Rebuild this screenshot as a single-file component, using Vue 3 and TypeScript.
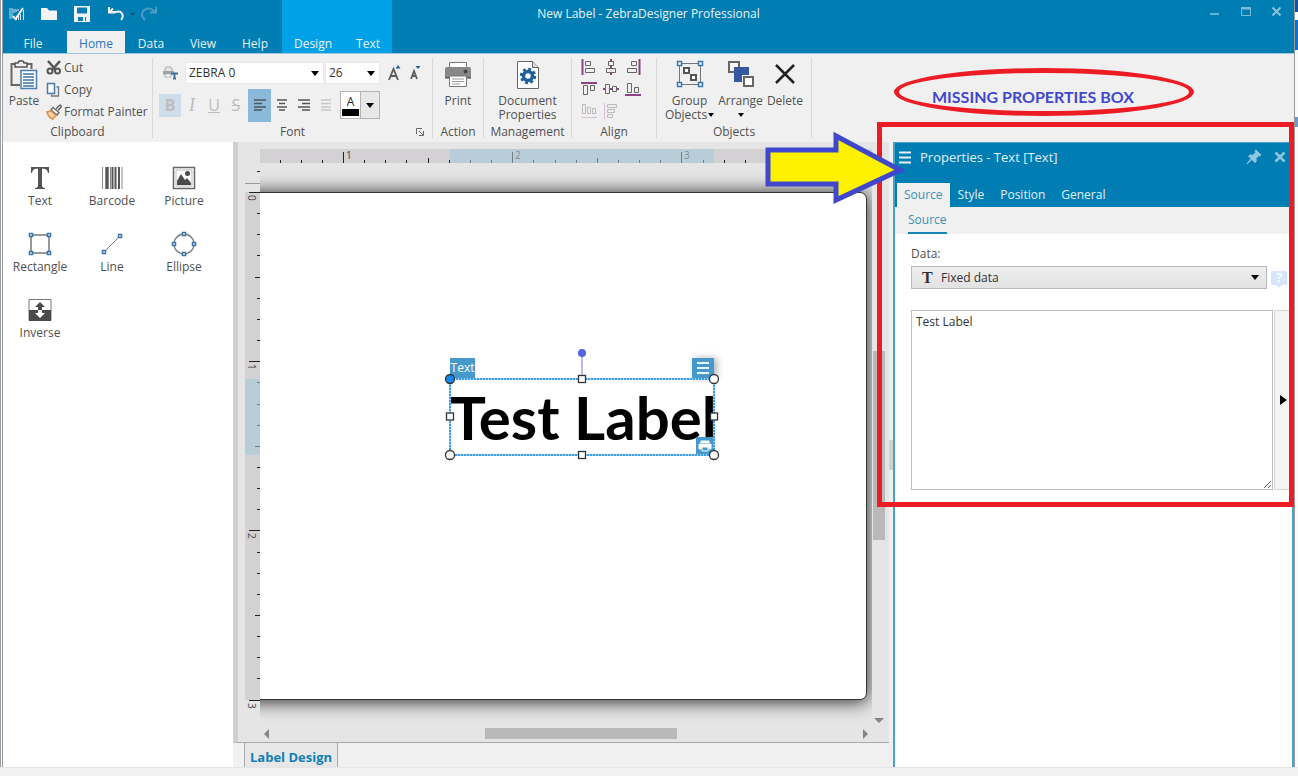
<script setup lang="ts">
import { ref } from 'vue'

interface Tick { pos: number; kind: 'major' | 'mid' | 'minor'; label: string; active: boolean }

const STEP = 169.2 / 8

function ticks(origin: number, from: number, to: number, activeFrom: number, activeTo: number, base: number): Tick[] {
  const out: Tick[] = []
  for (let n = from; n <= to; n++) {
    const pos = Math.round(origin + n * STEP)
    const m = ((n % 8) + 8) % 8
    out.push({
      pos,
      kind: m === 0 ? 'major' : m === 4 ? 'mid' : 'minor',
      label: m === 0 ? String(base + n / 8) : '',
      active: pos > activeFrom && pos < activeTo,
    })
  }
  return out
}

const hTicks = ticks(83, -3, 24, 190, 454, 1)
const vTicks = ticks(29, -1, 24, 216, 292, 0)

function tickLength(kind: Tick['kind']): number {
  return kind === 'major' ? 11 : kind === 'mid' ? 5 : 3
}

const fontName = ref('ZEBRA 0')
const fontSize = ref('26')
const dataSource = ref('Fixed data')
const content = ref('Test Label')
const tabs = ['File', 'Home', 'Data', 'View', 'Help']
const activeTab = ref('Home')
const panelTabs = ['Source', 'Style', 'Position', 'General']
const activePanelTab = ref('Source')
</script>

<template>
  <div class="desktop">
    <div class="frame">
      <div class="app">
        <header class="titlebar">
          <div class="title-left">
            <div class="nav">
              <div class="quick">
                <svg class="logo" width="16" height="14" viewBox="0 0 16 14"><path d="M1 1v11M3 1v11" stroke="#b9d9e8" /><path d="M5 2v4M7 2v3M9 2v2M7.500 11v2M9.500 9v4M11.500 7v6M14.500 3v10" stroke="#d5e8f1" /><path d="M4 9l2.500 3L14 1" stroke="#fff" stroke-width="1.800" fill="none" /></svg>
                <button aria-label="Open"><svg width="18" height="14" viewBox="0 0 18 14"><path d="M1 1h6l2 2.500h8V13H1z" fill="#f4f4f4" /></svg></button>
                <button aria-label="Save"><svg width="18" height="18" viewBox="0 0 18 18"><path d="M1 1h16v16H1z" fill="#f0f4f6" /><path d="M4 2.500h10v6H4zM5 12h8v4H5z" fill="#0a7db2" /><path d="M10 12h2v4h-2z" fill="#f0f4f6" /></svg></button>
                <button class="undo" aria-label="Undo"><svg width="30" height="16" viewBox="0 0 30 16"><path d="M3 6h7c5-2 9 3 5 8M3 1v5.500h6M3 6.500l4-4" fill="none" stroke="#f0f4f6" stroke-width="2" /><path d="M24 7h5l-2.500 2z" fill="#1e4052" /></svg></button>
                <button aria-label="Redo"><svg width="30" height="16" viewBox="0 0 30 16"><path d="M16 6.500l-4-3C7 .500 0 5 2.500 11L5 14M16 1v5.500h-6" fill="none" stroke="#4a9dc3" stroke-width="2" /><path d="M23 7h5l-2.500 2z" fill="#2a7096" /></svg></button>
              </div>
              <nav class="tabs">
                <button v-for="t in tabs" :key="t" class="tab" :class="{ on: t === activeTab, file: t === 'File' }" @click="activeTab = t">{{ t }}</button>
              </nav>
            </div>
            <nav class="context">
              <button class="tab design">Design</button>
              <button class="tab">Text</button>
            </nav>
          </div>
          <div class="caption">New Label - ZebraDesigner Professional</div>
          <div class="winctl">
            <button aria-label="Minimize"><svg width="12" height="12"><path d="M1 8h9" stroke="#8cc3db" stroke-width="1.500" /></svg></button>
            <button aria-label="Maximize"><svg width="12" height="12"><path d="M1.500 1.500h9v8h-9z" fill="none" stroke="#7dbbd7" /><path d="M1 2.500h10" stroke="#7dbbd7" stroke-width="2" /></svg></button>
            <button aria-label="Close"><svg width="12" height="12"><path d="M1.500 1.500l8 8M9.500 1.500l-8 8" stroke="#8cc3db" stroke-width="2" /></svg></button>
          </div>
        </header>

        <section class="ribbon">
          <div class="group g-clip">
            <div class="group-body">
              <button class="big paste">
                <svg width="28" height="30" viewBox="0 0 28 30"><path d="M5 4H1.500v21H10M17 4h4.500v5" fill="none" stroke="#666" stroke-width="2" /><path d="M5 7V3h3c0-3 6-3 6 0h3v4z" fill="#f0f0f0" stroke="#555" stroke-width="1.500" /><path d="M11 10.500h15.500v18H11z" fill="#fff" stroke="#4d7eaa" stroke-width="1.500" /><path d="M13 14h11M13 17h11M13 20h11M13 23h11M13 26h11" stroke="#3d73a4" stroke-width="1.500" /></svg>
                <span>Paste</span>
              </button>
              <div class="clip-list">
                <button><svg width="16" height="16" viewBox="0 0 16 16"><path d="M2 1l8 9M14 1L6 10" stroke="#555" stroke-width="2.500" /><circle cx="4" cy="11" r="2.500" fill="none" stroke="#555" stroke-width="2" /><circle cx="11.500" cy="11" r="2.500" fill="none" stroke="#555" stroke-width="2" /></svg>Cut</button>
                <button><svg width="16" height="16" viewBox="0 0 16 16"><path d="M1.500 1.500h7v10h-7z" fill="#fff" stroke="#4479a8" stroke-width="1.500" /><path d="M10.500 5h2v9h-7v-1.500" fill="none" stroke="#777" stroke-width="1.300" /></svg>Copy</button>
                <button><svg width="16" height="16" viewBox="0 0 16 16"><path d="M10 5l4-4 1.500 1.500L12 6.500" fill="#eee" stroke="#666" stroke-width="1.300" /><path d="M7 3.500l6 5-2 2.500-6-5z" fill="#fff" stroke="#666" stroke-width="1.300" /><path d="M4.500 6.500l5.500 5-3.500 3.500C4 14 2 11.500 1 8c1.500.3 2.500-.5 3.500-1.500z" fill="#fbd3ad" stroke="#e08a45" stroke-width="1.500" /></svg>Format Painter</button>
              </div>
            </div>
            <div class="group-name">Clipboard</div>
          </div>

          <div class="group g-font">
            <div class="group-body font-body">
              <div class="font-row">
                <svg class="printer-font" width="16" height="14" viewBox="0 0 16 14"><rect x="2" y="1" width="7" height="5" rx="2" fill="#e4e4e4" stroke="#aaa" /><path d="M0 5h11v3.500H0z" fill="#a2a2a2" /><path d="M2 8h6v3H2z" fill="#fff" stroke="#aaa" /><path d="M8 7.500h7M11.500 7v6M10 12.500h3" stroke="#3c6ea1" stroke-width="1.800" /></svg>
                <label class="combo wide"><select v-model="fontName" aria-label="Font"><option>ZEBRA 0</option></select><svg width="8" height="5"><path d="M0 0h8L4 5z" /></svg></label>
                <label class="combo narrow"><select v-model="fontSize" aria-label="Font size"><option>26</option></select><svg width="8" height="5"><path d="M0 0h8L4 5z" /></svg></label>
                <button class="grow" aria-label="Increase font size"><svg width="14" height="16" viewBox="0 0 14 16"><path d="M1 15L5.500 4 10 15M2.500 11h6" fill="none" stroke="#5d5d5d" stroke-width="1.800" /><path d="M7.500 3.500h5L10 0z" fill="#1d5d98" /></svg></button>
                <button class="grow" aria-label="Decrease font size"><svg width="14" height="16" viewBox="0 0 14 16"><path d="M2 14l3-8 3 8M3 11h4" fill="none" stroke="#5d5d5d" stroke-width="1.800" /><path d="M6.500 1h5L9 4z" fill="#1d5d98" /></svg></button>
              </div>
              <div class="font-row second">
                <button class="fmt bold">B</button>
                <button class="fmt italic">I</button>
                <button class="fmt under">U</button>
                <button class="fmt strike">S</button>
                <button class="fmt al on" aria-label="Align left"><svg width="14" height="12"><path d="M1 1h12M1 4.500h8M1 8h12M1 11h8" stroke="#555" stroke-width="1.500" /></svg></button>
                <button class="fmt" aria-label="Align center"><svg width="12" height="12"><path d="M1 1h10M3 4.500h6M1 8h10M3 11h6" stroke="#555" stroke-width="1.500" /></svg></button>
                <button class="fmt" aria-label="Align right"><svg width="12" height="12"><path d="M0 1h12M4 4.500h8M0 8h12M4 11h8" stroke="#555" stroke-width="1.500" /></svg></button>
                <button class="fmt" aria-label="Justify"><svg width="12" height="12"><path d="M1 1h10M1 4.500h10M1 8h10M1 11h10" stroke="#c8c8c8" stroke-width="1.500" /></svg></button>
                <button class="color" aria-label="Font color"><span class="swatch">A</span><span class="drop"><svg width="8" height="5"><path d="M0 0h8L4 5z" /></svg></span></button>
              </div>
            </div>
            <div class="group-name">Font<button class="launcher" aria-label="Font settings"><svg width="8" height="8"><path d="M.5 6V.5H6M3 3l4 4M7.500 3v4.500H3" fill="none" stroke="#666" /></svg></button></div>
          </div>

          <div class="group g-action">
            <div class="group-body">
              <button class="big">
                <svg width="28" height="30" viewBox="0 0 28 30"><path d="M5.500 9V2.500h17V9" fill="#fff" stroke="#777" /><path d="M1 9q0-2 2-2h22q2 0 2 2v9H1z" fill="#888" /><circle cx="21.500" cy="11.500" r="2" fill="#444" /><path d="M1 17h26v1.500H1z" fill="#555" /><path d="M5.500 16h17v10.500h-17z" fill="#fff" stroke="#777" /><path d="M8 19h12M8 21.500h12M8 24h8" stroke="#999" /></svg>
                <span>Print</span>
              </button>
            </div>
            <div class="group-name">Action</div>
          </div>

          <div class="group g-manage">
            <div class="group-body">
              <button class="big">
                <svg width="28" height="30" viewBox="0 0 28 30"><path d="M3.500 1.500h15l6 6v21h-21z" fill="#fff" stroke="#666" /><path d="M18.500 1.500v6h6" fill="#ddd" stroke="#666" /><circle cx="14" cy="16" r="4.500" fill="none" stroke="#1f609a" stroke-width="3.500" /><circle cx="14" cy="16" r="7" fill="none" stroke="#1f609a" stroke-width="2.500" stroke-dasharray="3 2.500" /></svg>
                <span>Document</span><span>Properties</span>
              </button>
            </div>
            <div class="group-name">Management</div>
          </div>

          <div class="group g-align">
            <div class="group-body align-grid">
              <button aria-label="Align left edges"><svg width="16" height="16"><path d="M1.500 0v16" stroke="#8a4386" stroke-width="2" /><path d="M4.500 2.500h5v4h-5zM4.500 9.500h9v4h-9z" fill="none" stroke="#666" /></svg></button>
              <button aria-label="Align centers"><svg width="16" height="16"><path d="M8 0v16" stroke="#8a4386" stroke-width="2" /><path d="M5.500 2.500h5v4h-5zM3.500 9.500h9v4h-9z" fill="#f0f0f0" stroke="#666" /></svg></button>
              <button aria-label="Align right edges"><svg width="16" height="16"><path d="M14.500 0v16" stroke="#8a4386" stroke-width="2" /><path d="M6.500 2.500h5v4h-5zM2.500 9.500h9v4h-9z" fill="none" stroke="#666" /></svg></button>
              <button aria-label="Align tops"><svg width="16" height="16"><path d="M0 2h16" stroke="#8a4386" stroke-width="2" /><path d="M2.500 4.500h4v9h-4zM9.500 4.500h4v5h-4z" fill="none" stroke="#666" /></svg></button>
              <button aria-label="Align middles"><svg width="16" height="16"><path d="M0 8h16" stroke="#8a4386" stroke-width="2" /><path d="M2.500 3.500h4v9h-4zM9.500 5.500h4v5h-4z" fill="#f0f0f0" stroke="#666" /></svg></button>
              <button aria-label="Align bottoms"><svg width="16" height="16"><path d="M0 14h16" stroke="#8a4386" stroke-width="2" /><path d="M2.500 2.500h4v9h-4zM9.500 6.500h4v5h-4z" fill="none" stroke="#666" /></svg></button>
              <button class="off" aria-label="Distribute horizontally"><svg width="16" height="16"><path d="M0 14.500h16" stroke="#c99bc6" /><path d="M1.500 1.500h3v9h-3zM6.500 4.500h3v6h-3zM11.500 5.500h3v5h-3z" fill="none" stroke="#999" /></svg></button>
              <button class="off" aria-label="Distribute vertically"><svg width="16" height="16"><path d="M1.500 0v16" stroke="#c99bc6" /><path d="M4.500 1.500h9v3h-9zM4.500 6.500h7v3h-7zM4.500 11.500h5v3h-5z" fill="none" stroke="#999" /></svg></button>
            </div>
            <div class="group-name">Align</div>
          </div>

          <div class="group g-objects">
            <div class="group-body">
              <button class="big group-btn">
                <svg width="28" height="30" viewBox="0 0 28 30"><path d="M3.500 3.500h21v21h-21z" fill="none" stroke="#777" /><path d="M1.500 1.500h4v4h-4zM22.500 1.500h4v4h-4zM1.500 22.500h4v4h-4zM22.500 22.500h4v4h-4z" fill="#fff" stroke="#3975a8" stroke-width="1.500" /><path d="M8 8h5v5H8zM15 15h5v5h-5z" fill="#fff" stroke="#555" stroke-width="2" /></svg>
                <span>Group</span><span class="with-caret">Objects<svg width="6" height="4"><path d="M0 0h6L3 4z" /></svg></span>
              </button>
              <button class="big arrange">
                <svg width="28" height="30" viewBox="0 0 28 30"><path d="M2 2h10v10H2z" fill="#f7f7f7" stroke="#666" stroke-width="2" /><path d="M7 7h15v15H7z" fill="#3459a0" /><path d="M15 15h12v12H15z" fill="#f0f0f0" /><path d="M17 17h9v9h-9z" fill="#fff" stroke="#666" stroke-width="2" /></svg>
                <span>Arrange</span><span class="with-caret"><svg width="6" height="4"><path d="M0 0h6L3 4z" /></svg></span>
              </button>
              <button class="big delete">
                <svg width="28" height="30" viewBox="0 0 28 30"><path d="M5 5l18 18M23 5L5 23" stroke="#222" stroke-width="2.500" /></svg>
                <span>Delete</span>
              </button>
            </div>
            <div class="group-name">Objects</div>
          </div>
        </section>

        <main class="body">
          <aside class="toolbox">
            <button class="tool"><svg width="26" height="26" viewBox="0 0 26 26"><path d="M4 2h18v6h-1q-.5-4-4-4.300h-2V20q0 2.800 3 3v1H8v-1q3-.2 3-3V3.700H9Q5.500 4 5 8H4z" fill="#555" /></svg>Text</button>
            <button class="tool"><svg width="26" height="26" viewBox="0 0 26 26"><path d="M3.500 2v22M6.500 2v22M9.500 2v22M11.500 2v22M23 2v22" stroke="#888" stroke-width="1" /><path d="M8 2v22M13.500 2v22M16.500 2v22M20 2v22" stroke="#555" stroke-width="2" /></svg>Barcode</button>
            <button class="tool"><svg width="26" height="26" viewBox="0 0 26 26"><path d="M2.500 2.500h21v21h-21z" fill="#fff" stroke="#666" stroke-width="1.500" /><path d="M5 5h16v16H5z" fill="none" stroke="#bbb" /><path d="M6 20v-4l4-7 4 6 2-2 4 5v2z" fill="#4a4a4a" /><circle cx="16.500" cy="8.500" r="2.500" fill="#4a4a4a" /></svg>Picture</button>
            <button class="tool"><svg width="26" height="26" viewBox="0 0 26 26"><path d="M4 4h18v18H4z" fill="none" stroke="#777" stroke-width="1.500" /><path d="M2.500 2.500h3v3h-3zM20.500 2.500h3v3h-3zM2.500 20.500h3v3h-3zM20.500 20.500h3v3h-3z" fill="#fff" stroke="#3975a8" stroke-width="1.500" /></svg>Rectangle</button>
            <button class="tool"><svg width="26" height="26" viewBox="0 0 26 26"><path d="M5 21L21 5" stroke="#888" /><path d="M3.500 19.500h3v3h-3zM19.500 3.500h3v3h-3z" fill="#fff" stroke="#3975a8" stroke-width="1.500" /></svg>Line</button>
            <button class="tool"><svg width="26" height="26" viewBox="0 0 26 26"><circle cx="13" cy="13" r="10" fill="none" stroke="#777" stroke-width="1.300" /><path d="M11.500 1.500h3v3h-3zM11.500 21.500h3v3h-3zM1.500 11.500h3v3h-3zM21.500 11.500h3v3h-3z" fill="#fff" stroke="#3975a8" stroke-width="1.500" /></svg>Ellipse</button>
            <button class="tool"><svg width="26" height="26" viewBox="0 0 26 26"><path d="M2 2.500h22v21H2z" fill="#fff" stroke="#777" /><path d="M2 13h22v11H2z" fill="#4a4a4a" /><path d="M13 5l5 5h-3v3h-4v-3H8z" fill="#4a4a4a" /><path d="M11 13h4v3h3l-5 5-5-5h3z" fill="#fff" /></svg>Inverse</button>
          </aside>

          <section class="workspace">
            <div class="editor">
              <div class="hruler">
                <svg width="100%" height="14">
                  <rect width="100%" height="14" fill="#d3d1d4" />
                  <rect x="190" width="264" height="14" fill="#b9cdd8" />
                  <g v-for="t in hTicks" :key="t.pos" :class="{ faint: t.active }">
                    <rect :x="t.pos" :y="14 - tickLength(t.kind)" width="1" :height="tickLength(t.kind)" fill="#222" />
                    <text v-if="t.label" :x="t.pos + 3" y="10">{{ t.label }}</text>
                  </g>
                </svg>
              </div>
              <div class="vruler">
                <svg width="15" height="100%">
                  <rect y="29" width="15" height="508" fill="#d3d1d4" />
                  <rect y="216" width="15" height="76" fill="#b9cdd8" />
                  <rect y="20" width="15" height="1" fill="#999" />
                  <g v-for="t in vTicks" :key="t.pos" :class="{ faint: t.active }">
                    <rect :x="15 - tickLength(t.kind)" :y="t.pos" :width="tickLength(t.kind)" height="1" fill="#222" />
                    <text v-if="t.label" :transform="`translate(3 ${t.pos + 3}) rotate(90)`">{{ t.label }}</text>
                  </g>
                </svg>
              </div>
              <div class="canvas">
                <div class="paper"></div>
                <div class="object">
                  <span class="tag">Text</span>
                  <button class="menu" aria-label="Object menu"><svg width="14" height="14"><path d="M1 2h12M1 7h12M1 12h12" stroke="#eaf4fa" stroke-width="2" /></svg></button>
                  <div class="object-text">Test Label</div>
                  <span class="printable"><svg width="14" height="12" viewBox="0 0 14 12"><path d="M3 3V1h8v2M1 4h12v5h-2V7H3v2H1z" fill="#fff" stroke="#fff" /><path d="M4 7h6v4H4z" fill="#4599cb" stroke="#fff" /></svg></span>
                  <svg class="handles" width="284" height="120" viewBox="-10 -34 284 120">
                    <path d="M132-26V0" stroke="#a3a5e8" stroke-width="1.500" />
                    <rect width="264" height="76" fill="none" stroke="#a9d6f9" stroke-width="2" />
                    <rect width="264" height="76" fill="none" stroke="#3a9bee" stroke-width="2" stroke-dasharray="2 1" />
                    <circle cx="132" cy="-26" r="4" fill="#5661dc" />
                    <g fill="#fff" stroke="#333" stroke-width="1.300">
                      <rect x="128.500" y="-3.500" width="7" height="7" /><rect x="128.500" y="72.500" width="7" height="7" />
                      <rect x="-3.500" y="34" width="7" height="7" /><rect x="260.500" y="34" width="7" height="7" />
                      <circle cx="264" cy="0" r="4.500" /><circle cx="264" cy="76" r="4.500" /><circle cx="0" cy="76" r="4.500" />
                      <circle cx="0" cy="0" r="4.500" fill="#1687f0" />
                    </g>
                  </svg>
                </div>
              </div>
              <div class="vscroll">
                <span class="vthumb"></span>
                <svg width="10" height="6"><path d="M0 0h10L5 5z" fill="#858585" /></svg>
              </div>
              <div class="hscroll">
                <svg width="6" height="10"><path d="M5 0v10L0 5z" fill="#858585" /></svg>
                <span class="hthumb"></span>
                <svg width="6" height="10"><path d="M0 0v10l5-5z" fill="#858585" /></svg>
              </div>
            </div>
            <div class="doc-tabs"><button class="doc-tab">Label Design</button></div>
          </section>
          <div class="splitter"><span></span></div>

          <aside class="panel">
            <header class="panel-head">
              <div class="panel-title">
                <svg width="13" height="13"><path d="M0 1.500h12M0 6.500h12M0 11.500h12" stroke="#e6f2f8" stroke-width="2" /></svg>
                <h2>Properties - Text [Text]</h2>
                <button aria-label="Pin"><svg width="16" height="16" viewBox="0 0 16 16"><path d="M10 1l5 5-1.500 1-1-.2-2.500 2.700.2 3L9 13.500 5.800 10.500 1 15l4-5.500L2.500 7 4 6l3 .2L9.500 3.500 9 2z" fill="#8cc6df" stroke="#8cc6df" /></svg></button>
                <button aria-label="Close panel"><svg width="12" height="12"><path d="M1.500 1.500l9 9M10.500 1.500l-9 9" stroke="#8cc6df" stroke-width="2.500" /></svg></button>
              </div>
              <nav class="panel-tabs">
                <button v-for="t in panelTabs" :key="t" :class="{ on: t === activePanelTab }" @click="activePanelTab = t">{{ t }}</button>
              </nav>
            </header>
            <nav class="subtabs"><button>Source</button></nav>
            <form class="form" @submit.prevent>
              <label for="data-source">Data:</label>
              <div class="source-row">
                <div class="source-select">
                  <span class="serif-t">T</span>
                  <select id="data-source" v-model="dataSource"><option>Fixed data</option></select>
                  <svg width="8" height="5"><path d="M0 0h8L4 5z" /></svg>
                </div>
                <button class="help" aria-label="Help">?</button>
              </div>
              <div class="content-row">
                <textarea v-model="content" aria-label="Content"></textarea>
                <button class="expand" aria-label="Expand"><svg width="8" height="10"><path d="M0 0l7 5-7 5z" /></svg></button>
              </div>
            </form>
          </aside>
        </main>

        <div class="note-box"></div>
        <div class="note-oval"></div>
        <div class="note-text">MISSING PROPERTIES BOX</div>
        <svg class="note-arrow" width="142" height="76" viewBox="0 0 142 76"><path d="M4 20h68V6l64 34-64 30V54H4z" fill="#fff200" stroke="#3f48cc" stroke-width="5" /></svg>
      </div>
      <div class="behind"><span class="b1"></span><span class="b2"></span><span class="b3"></span></div>
    </div>
    <footer class="below"></footer>
  </div>
</template>

<style>
body { margin: 0; }
</style>

<style scoped>
* { box-sizing: border-box; }
.desktop {
  min-height: 100vh; display: flex; flex-direction: column; background: #f2f2f2;
  font-family: "Open Sans", "Noto Sans", sans-serif; font-size: 12px; line-height: 14px; color: #505050;
}
button { font: inherit; color: inherit; background: none; border: 0; padding: 0; margin: 0; }
select, textarea { font: inherit; }
svg { flex: none; display: block; }
.frame { flex: 1; display: flex; min-width: 0; }
.app {
  flex: 1; min-width: 0; position: relative; display: flex; flex-direction: column; background: #fff;
  border-left: 3px double #999ea2; border-right: 1px solid #999;
}
.behind { width: 3px; display: flex; flex-direction: column; background: #fafafa; }
.b1 { height: 12px; background: #1253a8; }
.b2 { height: 30px; margin-top: 8px; background: #0b70d0; }
.b3 { height: 10px; margin-top: 67px; background: #7098ca; }
.below { height: 9px; border-top: 1px solid #e5e5e5; }

.titlebar { height: 54px; display: grid; grid-template-columns: 389px 1fr 389px; background: #007db3; border-bottom: 1px solid #9cc9dd; color: #e8f3f8; }
.title-left { display: flex; }
.nav { width: 279px; display: flex; flex-direction: column; }
.quick { height: 27px; display: flex; align-items: center; padding-left: 6px; }
.quick .logo { margin-right: 15px; }
.quick button { margin-right: 15px; }
.quick .undo { margin-right: 4px; }
.tabs { flex: 1; display: flex; align-items: flex-end; padding-top: 4px; }
.tab { width: 52px; height: 22px; padding-top: 3px; }
.tab.file { width: 64px; padding-right: 4px; }
.tab.on { width: 58px; background: #f0f0f0; color: #2878bd; }
.context { width: 110px; background: #00a1e6; display: flex; align-items: flex-end; }
.context .tab { width: 48px; }
.context .design { width: 62px; }
.caption { text-align: center; padding-top: 7px; white-space: nowrap; }
.winctl { display: flex; justify-content: flex-end; align-items: flex-start; gap: 19px; padding: 6px 11px 0 0; }

.ribbon { height: 88px; display: flex; background: #f0f0f0; padding: 4px 0; }
.group { border-right: 1px solid #d9d9d9; display: flex; flex-direction: column; }
.g-clip { width: 150px; }
.g-font { width: 280px; }
.g-action { width: 51px; }
.g-manage { width: 88px; }
.g-align { width: 85px; }
.g-objects { width: 155px; }
.group-body { flex: 1; display: flex; justify-content: center; align-items: flex-start; }
.group-name { height: 14px; text-align: center; position: relative; margin-bottom: -1px; }
.launcher { position: absolute; right: 8px; top: 3px; }
.big { display: flex; flex-direction: column; align-items: center; padding-top: 2px; white-space: nowrap; }
.big > svg { margin-bottom: 4px; }
.big span { display: block; }
.paste { width: 42px; }
.clip-list { flex: 1; display: flex; flex-direction: column; gap: 8px; padding: 3px 0 0 1px; }
.clip-list button { display: flex; align-items: center; gap: 2px; height: 14px; white-space: nowrap; }
.big .with-caret { display: flex; align-items: center; gap: 1px; height: 14px; }
.group-btn { width: 50px; }
.arrange { width: 52px; }
.delete { width: 37px; }
.font-body { flex-direction: column; justify-content: flex-start; padding-left: 6px; }
.font-row { display: flex; align-items: center; height: 30px; }
.font-row.second { height: 34px; }
.printer-font { margin: 0 6px 0 4px; }
.combo { display: grid; align-items: center; height: 22px; background: #fff; border: 1px solid #e2eaf0; margin-right: 1px; color: #333; }
.combo select { grid-area: 1 / 1; width: 100%; height: 20px; padding: 0 3px; appearance: none; border: 0; background: none; color: #333; }
.combo svg { grid-area: 1 / 1; justify-self: end; margin-right: 4px; pointer-events: none; }
.wide { width: 139px; }
.narrow { width: 55px; }
.grow { margin: 0 0 0 7px; }
.fmt { width: 22px; height: 23px; display: flex; justify-content: center; align-items: center; color: #bdbdbd; font-size: 16px; }
.bold { background: #cddde9; font-weight: 700; }
.italic { font-family: "Liberation Serif", serif; font-style: italic; font-size: 18px; }
.under { text-decoration: underline; }
.strike { text-decoration: line-through; }
.al { width: 23px; height: 33px; margin-left: 1px; }
.al.on { background: #8bb9dc; }
.color { width: 40px; height: 28px; margin-left: 3px; display: flex; border: 1px solid #b4b4b4; }
.swatch { width: 20px; padding-top: 3px; background: #fff; color: #222; border-right: 1px solid #b4b4b4; }
.swatch::after { content: ""; display: block; height: 7px; margin: 0 1px; background: #000; }
.drop { flex: 1; display: grid; place-items: center; align-self: stretch; background: #e8e8e8; }
.align-grid { display: grid; grid-template-columns: repeat(3, 16px); grid-template-rows: repeat(3, 16px); gap: 6px; justify-content: start; align-content: start; padding: 1px 0 0 9px; }
.off { opacity: .6; }

.body { flex: 1; display: flex; min-height: 0; }
.toolbox { width: 230px; padding: 20px 0 0 1px; display: grid; grid-template-columns: repeat(3, 72px); grid-auto-rows: 66px; align-content: start; }
.tool { display: flex; flex-direction: column; align-items: center; gap: 3px; padding-top: 3px; }

.workspace { flex: 1; min-width: 0; display: flex; flex-direction: column; background: #f0f0f0; }
.editor { flex: 1; display: grid; grid-template-columns: 15px 1fr 17px; grid-template-rows: 14px 1fr 17px; padding: 7px 0 0 7px; background: #e5e5e5; border-left: 5px solid #d0d0d0; border-bottom: 1px solid #aaa; }
.hruler { grid-area: 1 / 2; overflow: hidden; }
.vruler { grid-area: 2 / 1; overflow: hidden; }
.editor text { font-size: 10px; fill: #444; }
.faint { opacity: .45; }
.canvas { grid-area: 2 / 2; position: relative; overflow: hidden; }
.paper { position: absolute; left: -30px; top: 29px; width: 637px; height: 508px; background: #fff; border: 1px solid #333; border-radius: 7px; box-shadow: 0 1px 18px 1px rgba(0, 0, 0, .8); }
.object { position: absolute; left: 190px; top: 216px; width: 264px; height: 76px; }
.handles { position: absolute; left: -10px; top: -34px; }
.tag { position: absolute; left: 0; top: -21px; width: 25px; height: 20px; line-height: 20px; text-align: center; background: #4599cb; color: #fff; }
.menu { position: absolute; right: 0; top: -21px; width: 22px; height: 20px; display: grid; place-items: center; background: #4599cb; box-shadow: 3px 0 7px rgba(0, 0, 0, .3); }
.object-text { font: 700 60px/76px Lato, sans-serif; color: #000; text-align: center; white-space: nowrap; }
.printable { position: absolute; right: 0; bottom: 0; width: 18px; height: 18px; display: grid; place-items: center; background: #4599cb; }
.vscroll { grid-area: 2 / 3; display: flex; flex-direction: column; align-items: center; justify-content: space-between; padding: 188px 3px 1px 0; }
.vthumb { width: 12px; height: 189px; background: #b9b9b9; }
.hscroll { grid-area: 3 / 2; display: flex; align-items: center; justify-content: space-between; padding: 0 3px 0 4px; }
.hthumb { width: 192px; height: 11px; margin-left: 28px; background: #b9b9b9; }
.doc-tabs { height: 24px; padding-left: 11px; }
.doc-tab { height: 24px; padding: 3px 5px 0; background: #e7e7e7; border: solid #aaa; border-width: 0 1px; color: #0f80b5; font-size: 13px; font-weight: 700; }
.splitter { width: 4px; background: #f0f0f0; display: flex; align-items: center; }
.splitter span { width: 4px; height: 30px; background: #d0d0d0; }

.panel { width: 401px; display: flex; flex-direction: column; border: solid #48a3c9; border-width: 1px 2px 0; background: #fff; }
.panel-head { height: 64px; display: flex; flex-direction: column; justify-content: space-between; background: #007db3; color: #e2f0f7; }
.panel-title { display: flex; align-items: center; height: 28px; padding: 0 6px 0 4px; gap: 8px; }
.panel-title h2 { flex: 1; margin: 0; font-size: 13px; font-weight: 400; }
.panel-title button + button { margin-left: 4px; }
.panel-tabs { display: flex; padding-left: 2px; }
.panel-tabs button { height: 24px; padding: 0 8px; }
.panel-tabs .on { background: #f0f0f0; color: #3591bc; padding: 0 7px; }
.subtabs { height: 27px; padding: 0 13px; background: #f0f0f0; display: flex; align-items: flex-end; }
.subtabs button { height: 24px; padding-bottom: 3px; color: #3591bc; border-bottom: 2px solid #1684b5; }
.form { padding: 13px 0 0 16px; display: flex; flex-direction: column; }
.source-row { display: flex; align-items: center; gap: 4px; margin-top: 5px; }
.source-select { flex: 1; height: 23px; display: flex; align-items: center; padding: 0 7px 0 10px; border: 1px solid #b9b9b9; background: linear-gradient(#efefef, #e2e2e2); }
.serif-t { width: 15px; font: 700 16px/20px "Liberation Serif", serif; color: #333; }
.source-select select { flex: 1; appearance: none; border: 0; background: none; color: #333; padding: 0 4px; }
.help { position: relative; width: 16px; height: 14px; margin-right: 5px; border-radius: 2px; background: #d5e5fb; color: #fff; font-weight: 700; }
.help::after { content: ""; position: absolute; left: 5px; top: 14px; border: 3px solid transparent; border-top-color: #d5e5fb; }
.content-row { display: flex; gap: 1px; margin-top: 21px; }
textarea { flex: 1; min-width: 0; height: 180px; padding: 4px 4px; border: 1px solid #bdbdbd; color: #333; outline: 0; }
.expand { width: 18px; display: grid; place-items: center; border: 1px solid #d5d5d5; border-right: 0; background: #f5f5f5; }

.note-box { position: absolute; right: 0; top: 122px; width: 417px; height: 385px; border: 5px solid #ed1c24; }
.note-oval { position: absolute; right: 100px; top: 68px; width: 300px; height: 48px; border: 5px solid #ed1c24; border-radius: 50%; }
.note-text { position: absolute; right: 160px; top: 88px; white-space: nowrap; font: 700 16px/18px Lato, sans-serif; color: #3f48cc; }
.note-arrow { position: absolute; right: 388px; top: 130px; }
</style>
